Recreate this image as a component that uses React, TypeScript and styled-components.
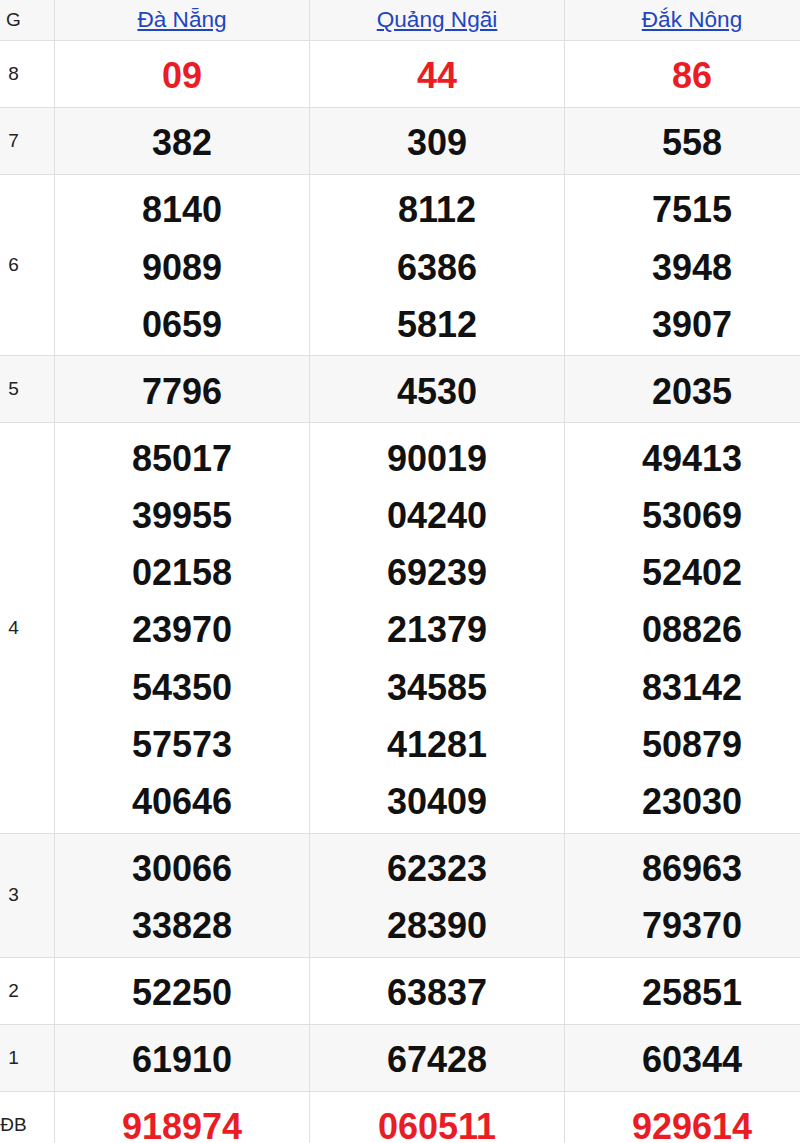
import React from "react";
import styled, { createGlobalStyle } from "styled-components";

const GlobalStyle = createGlobalStyle`
  html, body {
    margin: 0;
    padding: 0;
    overflow: hidden;
    background: #ffffff;
    font-family: "Liberation Sans", Arial, sans-serif;
  }
`;

const Board = styled.div`
  width: 847px;
  margin-left: -27px;
  display: flex;
  flex-direction: column;
`;

const Row = styled.div<{ $shaded?: boolean }>`
  display: grid;
  grid-template-columns: 82px repeat(3, 255px);
  background: ${(p) => (p.$shaded ? "#f7f7f7" : "#ffffff")};
  border-bottom: 1px solid #dfdfdf;
`;

const HeaderRow = styled(Row)`
  height: 41px;
  box-sizing: border-box;
`;

const Cell = styled.div`
  border-right: 1px solid #dfdfdf;
  display: flex;
  flex-direction: column;
  align-items: center;
  justify-content: center;
`;

const LabelCell = styled(Cell)`
  font-size: 19px;
  color: #222222;
`;

const HeadLink = styled.a`
  font-size: 22.6px;
  color: #2145c2;
  text-decoration: underline;
  text-underline-offset: 2px;
`;

const NumberCell = styled(Cell)`
  padding: 6.4px 0 2.4px;
`;

const Num = styled.span<{ $red?: boolean }>`
  font-size: 36px;
  font-weight: 700;
  line-height: 57.2px;
  color: ${(p) => (p.$red ? "#ea1c24" : "#111111")};
`;

type Prize = { label: string; red?: boolean; values: string[][] };

const provinces = ["Đà Nẵng", "Quảng Ngãi", "Đắk Nông"];

const prizes: Prize[] = [
  { label: "8", red: true, values: [["09"], ["44"], ["86"]] },
  { label: "7", values: [["382"], ["309"], ["558"]] },
  {
    label: "6",
    values: [
      ["8140", "9089", "0659"],
      ["8112", "6386", "5812"],
      ["7515", "3948", "3907"],
    ],
  },
  { label: "5", values: [["7796"], ["4530"], ["2035"]] },
  {
    label: "4",
    values: [
      ["85017", "39955", "02158", "23970", "54350", "57573", "40646"],
      ["90019", "04240", "69239", "21379", "34585", "41281", "30409"],
      ["49413", "53069", "52402", "08826", "83142", "50879", "23030"],
    ],
  },
  {
    label: "3",
    values: [
      ["30066", "33828"],
      ["62323", "28390"],
      ["86963", "79370"],
    ],
  },
  { label: "2", values: [["52250"], ["63837"], ["25851"]] },
  { label: "1", values: [["61910"], ["67428"], ["60344"]] },
  { label: "ĐB", red: true, values: [["918974"], ["060511"], ["929614"]] },
];

export default function App() {
  return (
    <>
      <GlobalStyle />
      <Board>
        <HeaderRow $shaded>
          <LabelCell>G</LabelCell>
          {provinces.map((p) => (
            <Cell key={p}>
              <HeadLink href="#">{p}</HeadLink>
            </Cell>
          ))}
        </HeaderRow>
        {prizes.map((prize, i) => (
          <Row key={prize.label} $shaded={i % 2 === 1}>
            <LabelCell>{prize.label}</LabelCell>
            {prize.values.map((col, j) => (
              <NumberCell key={j}>
                {col.map((v, k) => (
                  <Num key={k} $red={prize.red}>
                    {v}
                  </Num>
                ))}
              </NumberCell>
            ))}
          </Row>
        ))}
      </Board>
    </>
  );
}
